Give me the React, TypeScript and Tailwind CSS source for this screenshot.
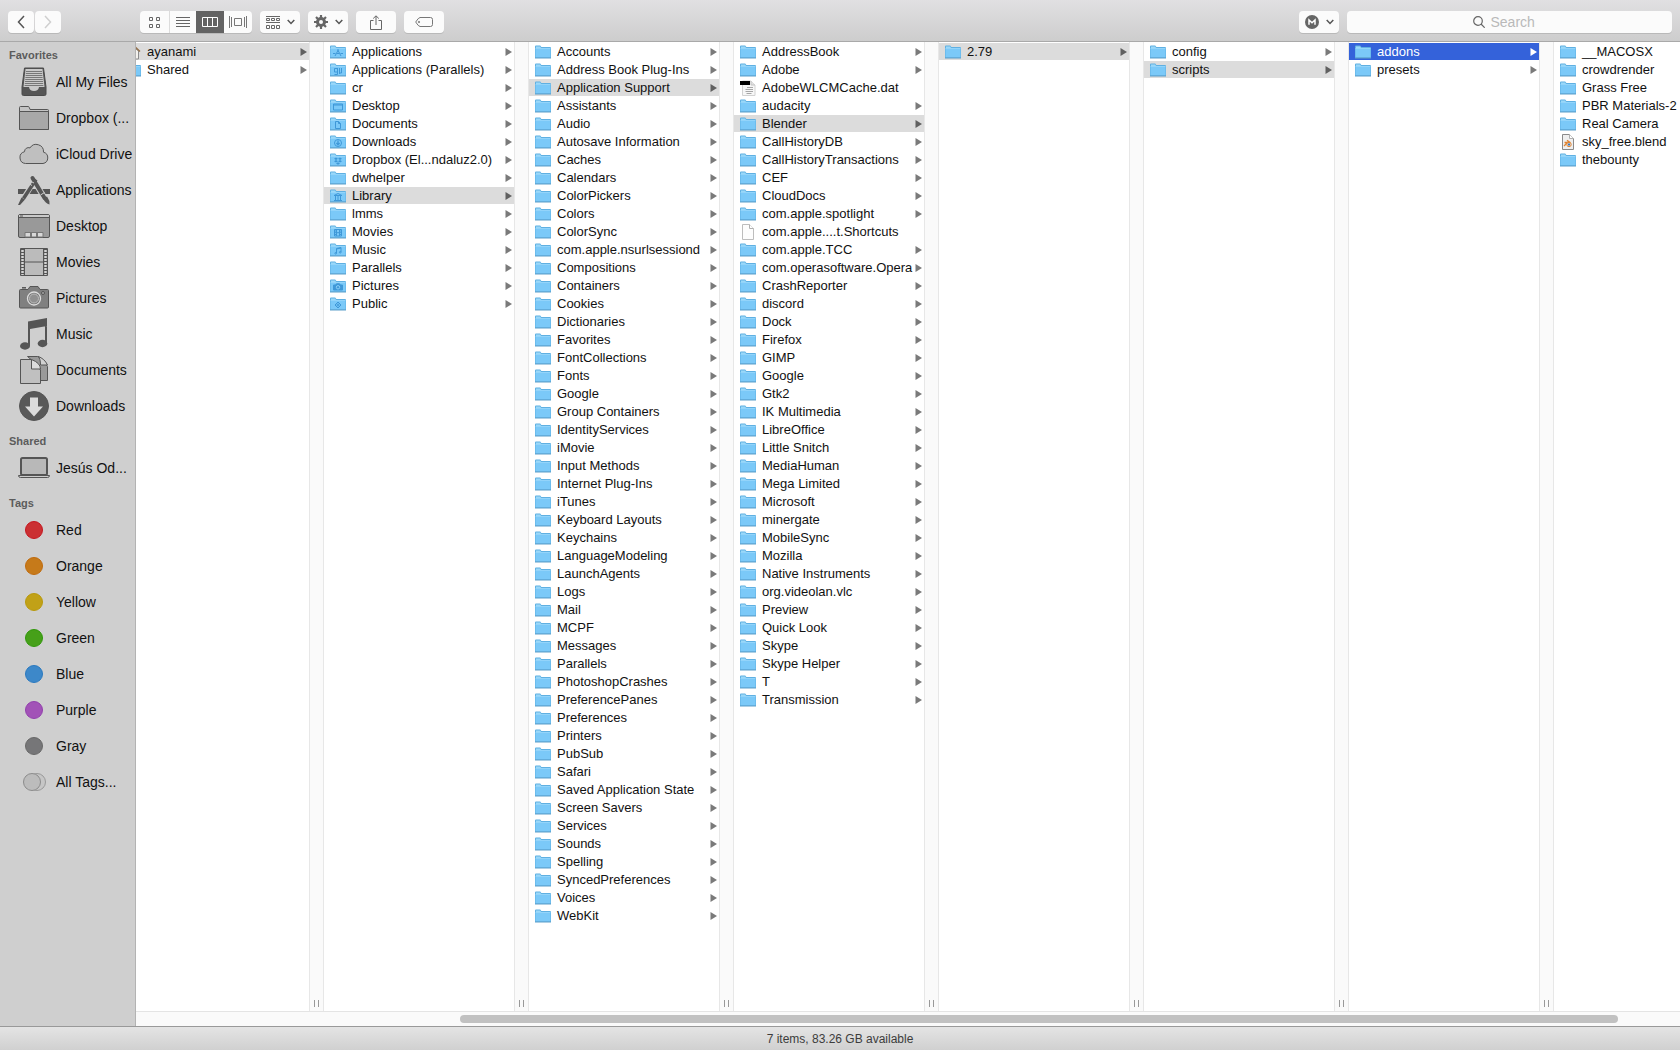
import type { ReactNode } from 'react';

type Entry = { name: string; glyph?: string; kind?: 'home' | 'dat' | 'file' | 'blend' };
type ColumnData = { id: string; selected?: string; active?: boolean; entries: Entry[] };

const folders = (names: string): Entry[] => names.split('|').map((name) => ({ name }));

const columns: ColumnData[] = [
  {
    id: 'Users',
    selected: 'ayanami',
    entries: [{ name: 'ayanami', kind: 'home' }, { name: 'Shared' }],
  },
  {
    id: 'ayanami',
    selected: 'Library',
    entries: [
      { name: 'Applications', glyph: 'apps' },
      { name: 'Applications (Parallels)', glyph: 'parallels' },
      { name: 'cr' },
      { name: 'Desktop', glyph: 'desktop' },
      { name: 'Documents', glyph: 'documents' },
      { name: 'Downloads', glyph: 'downloads' },
      { name: 'Dropbox (El...ndaluz2.0)', glyph: 'dropbox' },
      { name: 'dwhelper' },
      { name: 'Library', glyph: 'library' },
      { name: 'lmms' },
      { name: 'Movies', glyph: 'movies' },
      { name: 'Music', glyph: 'music' },
      { name: 'Parallels' },
      { name: 'Pictures', glyph: 'pictures' },
      { name: 'Public', glyph: 'public' },
    ],
  },
  {
    id: 'Library',
    selected: 'Application Support',
    entries: folders(
      'Accounts|Address Book Plug-Ins|Application Support|Assistants|Audio|Autosave Information|Caches|Calendars|ColorPickers|Colors|ColorSync|com.apple.nsurlsessiond|Compositions|Containers|Cookies|Dictionaries|Favorites|FontCollections|Fonts|Google|Group Containers|IdentityServices|iMovie|Input Methods|Internet Plug-Ins|iTunes|Keyboard Layouts|Keychains|LanguageModeling|LaunchAgents|Logs|Mail|MCPF|Messages|Parallels|PhotoshopCrashes|PreferencePanes|Preferences|Printers|PubSub|Safari|Saved Application State|Screen Savers|Services|Sounds|Spelling|SyncedPreferences|Voices|WebKit'
    ),
  },
  {
    id: 'Application Support',
    selected: 'Blender',
    entries: [
      ...folders('AddressBook|Adobe'),
      { name: 'AdobeWLCMCache.dat', kind: 'dat' },
      ...folders('audacity|Blender|CallHistoryDB|CallHistoryTransactions|CEF|CloudDocs|com.apple.spotlight'),
      { name: 'com.apple....t.Shortcuts', kind: 'file' },
      ...folders(
        'com.apple.TCC|com.operasoftware.Opera|CrashReporter|discord|Dock|Firefox|GIMP|Google|Gtk2|IK Multimedia|LibreOffice|Little Snitch|MediaHuman|Mega Limited|Microsoft|minergate|MobileSync|Mozilla|Native Instruments|org.videolan.vlc|Preview|Quick Look|Skype|Skype Helper|T|Transmission'
      ),
    ],
  },
  { id: 'Blender', selected: '2.79', entries: folders('2.79') },
  { id: '2.79', selected: 'scripts', entries: folders('config|scripts') },
  { id: 'scripts', selected: 'addons', active: true, entries: folders('addons|presets') },
  {
    id: 'addons',
    entries: [
      ...folders('__MACOSX|crowdrender|Grass Free|PBR Materials-2|Real Camera'),
      { name: 'sky_free.blend', kind: 'blend' },
      { name: 'thebounty' },
    ],
  },
];

// small marks stamped on the special folders
const glyphs: Record<string, ReactNode> = {
  apps: <path d="M8.5 4.5 5 11M7.500 4.500 11 11M3 8.500h2.500M7 8.500h2M10.500 8.500H13" />,
  parallels: <path d="M4.500 5.500h3v3.500h-3zM7.500 5v6.500H4.500M9.500 5v6M11.500 5v5h-2" />,
  desktop: <path d="M3.500 5h9v6h-9zM3.500 6h9" />,
  documents: <path d="M5.500 4.500h3l2 2v5h-5zM8.500 4.500v2h2" />,
  downloads: (
    <>
      <circle cx="8" cy="8" r="3.5" />
      <path d="M8 5.500v4M6.400 8 8 9.800 9.600 8" strokeWidth="1.300" />
    </>
  ),
  dropbox: (
    <path
      d="m6 4.500 2 1.200L6 7 4 5.700zM10 4.500l2 1.200L10 7 8 5.700zM6 7l2 1.300-2 1.200-2-1.200zM10 7l2 1.300-2 1.200-2-1.200zM8 9.300l2 1.200-2 1.200-2-1.200z"
      fill="#3f98d8"
      stroke="none"
    />
  ),
  library: <path d="M4 6.500h8L8 4.500zM4 11.500h8M5.500 7v4M8 7v4M10.500 7v4" />,
  movies: (
    <path d="M4.500 4.500h7v6.500h-7zM6.500 4.500V11M9.500 4.500V11M4.500 7.700h7M4.500 6h2M4.500 9.500h2M9.500 6h2M9.500 9.500h2" />
  ),
  music: (
    <>
      <path d="M6.500 10V5.500l4.500-1V9M6.500 6 11 5" />
      <circle cx="5.700" cy="10.300" r=".8" />
      <circle cx="10.200" cy="9.300" r=".8" />
    </>
  ),
  pictures: (
    <>
      <path d="M3.500 6h2l1-1.200h3l1 1.200h2v5h-9z" fill="#3f98d8" />
      <circle cx="8" cy="8.300" r="1.700" stroke="#8ad0f8" fill="#3f98d8" />
    </>
  ),
  public: <path d="m8 5 3 3-3 3-3-3zM8 6.500v3M6.500 8h3" />,
};

const FolderIcon = ({ glyph }: { glyph?: string }) => (
  <svg viewBox="0 0 16 14" className="h-3.5 w-4 shrink-0" aria-hidden="true">
    <path d="M0 13V1.500Q0 .5 1 .5h4.200l1.200 1.500H15q1 0 1 1V13z" fill="#5fb0e2" />
    <path d="M1 3V1.500h4l1.200 1.500z" fill="#9bd8f8" />
    <path d="M.5 4h15v8.500H.5z" fill="#7bc9f8" />
    <path d="M.5 3h15v1H.5z" fill="#93d4fa" />
    <path d="M0 12.500h16v1H0z" fill="#5c9fc9" />
    <g fill="none" stroke="#3f98d8">
      {glyph && glyphs[glyph]}
    </g>
  </svg>
);

const EntryIcon = ({ entry }: { entry: Entry }) => {
  if (!entry.kind) return <FolderIcon glyph={entry.glyph} />;
  if (entry.kind === 'home') {
    return (
      <svg viewBox="0 0 16 16" className="size-4 shrink-0" fill="none" aria-hidden="true">
        <path d="M3 7v8h10.500V7L8 2.500z" fill="#f4f2ee" stroke="#8b8b8b" />
        <path d="M.5 8 8 1l7 6.500" stroke="#94714c" strokeWidth="1.500" />
        <path d="M6 10h3v5H6z" fill="#a17c55" />
      </svg>
    );
  }
  if (entry.kind === 'dat') {
    return (
      <svg viewBox="0 0 16 16" className="size-4 shrink-0" fill="none" aria-hidden="true">
        <path d="M2.500 1h8.500l4 4v10.500H2.500z" fill="#f7f7f7" stroke="#d2d2d2" />
        <path d="M11 1v4h4" fill="#e2e2e2" stroke="#c4c4c4" />
        <path d="M7 7.500h6M5.500 9.500h7.500M5.500 11.500h7.500M6.500 13.500h5" stroke="#a6a6a6" />
        <path d="M0 1h10v4H0z" fill="#000" />
      </svg>
    );
  }
  return (
    <svg viewBox="0 0 16 16" className="size-4 shrink-0" fill="none" aria-hidden="true">
      <path
        d="M2.500.5H9.500l4 4v11h-11z"
        fill={entry.kind === 'blend' ? '#efefef' : '#fdfdfd'}
        stroke={entry.kind === 'blend' ? '#8a8a8a' : '#bdbdbd'}
      />
      <path d="M9.500.5v4h4" fill="#fff" stroke="#b0b0b0" />
      {entry.kind === 'blend' && (
        <>
          <path d="M4 12 8 8M4.500 8.500h4M7 6.200l3.500 2.500" stroke="#e0832f" strokeWidth="1.300" />
          <circle cx="9" cy="10.500" r="2.200" fill="#fff" stroke="#e0832f" />
          <circle cx="9" cy="10.500" r="1.200" fill="#3f76b5" />
        </>
      )}
    </svg>
  );
};

const Column = ({ column }: { column: ColumnData }) => (
  <ul className="flex w-[190px] shrink-0 flex-col gap-px pt-px" aria-label={column.id}>
    {column.entries.map((entry) => {
      const selected = entry.name === column.selected;
      const blue = selected && column.active;
      return (
        <li key={entry.name}>
          <button
            type="button"
            className={`flex h-[17px] w-full items-center pr-0.5 pl-1.5 text-left text-[13px] leading-[17px] whitespace-nowrap ${
              blue ? 'bg-[#3462da] text-white' : selected ? 'bg-[#dcdcdc] text-[#111]' : 'text-[#111]'
            }`}
          >
            <EntryIcon entry={entry} />
            <span className="ml-1.5 grow">{entry.name}</span>
            {(!entry.kind || entry.kind === 'home') && (
              <svg
                viewBox="0 0 7 8"
                className={`h-2 w-[7px] shrink-0 ${blue ? 'fill-white' : selected ? 'fill-[#606060]' : 'fill-[#7a7a7a]'}`}
                aria-hidden="true"
              >
                <path d="M.5 0 7 4 .5 8z" />
              </svg>
            )}
          </button>
        </li>
      );
    })}
  </ul>
);

const Gutter = () => (
  <div className="flex w-[15px] shrink-0 items-end justify-center gap-[3px] border-x border-[#e7e7e7] bg-[#fafafa] pb-1">
    <span className="h-[7px] w-px bg-[#999]" />
    <span className="h-[7px] w-px bg-[#999]" />
  </div>
);

const SideIcon = ({ children }: { children: ReactNode }) => (
  <svg viewBox="0 0 32 32" className="size-8 shrink-0" fill="none" stroke="#555" aria-hidden="true">
    {children}
  </svg>
);

const favorites: { name: string; icon: ReactNode }[] = [
  {
    name: 'All My Files',
    icon: (
      <>
        <path d="M6.500 2h19L28 21v7q0 1.500-1.500 1.500h-21Q4 29.500 4 28v-7z" fill="#555" stroke="#4a4a4a" />
        <path d="M7.500 3h17L26.500 21H21q-.5 4-5 4t-5-4H5.500z" fill="#c9c9c9" stroke="none" />
        <path
          d="M8 5.500h16M7.800 7.500h16.400M7.600 9.500h16.800M7.400 11.500h17.200M7.200 13.500h17.600M7 15.500h18M6.800 17.500h18.400M6.600 19.500h18.800"
          stroke="#777"
        />
      </>
    ),
  },
  {
    name: 'Dropbox (...',
    icon: (
      <>
        <path d="M1.500 27V5.500q0-1 1-1h7.500q1 0 1.300 1l.7 2H29.500q1 0 1 1V27q0 .5-.5.5H2q-.5 0-.5-.5z" fill="#c4c4c4" />
        <path d="M1.500 9.500h29V27.500h-29z" fill="#a8a8a8" />
      </>
    ),
  },
  {
    name: 'iCloud Drive',
    icon: (
      <path
        d="M7.500 25.500a6 6 0 0 1-1-11.800 4 4 0 0 1 5.500-3.800 7.300 7.300 0 0 1 13.500 4.300 5.800 5.800 0 0 1-.5 11.300z"
        fill="#bfbfbf"
      />
    ),
  },
  {
    name: 'Applications',
    icon: (
      <>
        <path d="M0 15h32v5H0z" fill="#555" stroke="none" />
        <path d="M14.500 4 27 25" stroke="#cfcfcf" strokeWidth="6" />
        <path d="M17.500 5 4 27" stroke="#cfcfcf" strokeWidth="5.500" />
        <path d="M14.500 4 26.500 24" strokeWidth="4" strokeLinecap="round" />
        <path d="M18 5.500 5.500 24.500" strokeWidth="3.500" />
        <path d="M25 24.500l4-2q3 4 2.500 8-4-1-6.500-6zM3.500 23.500l3.500 2-5 5.500H0z" fill="#555" stroke="none" />
        <path d="m10 9 4 2.500M22.500 21l4-2.500M12 7l4 2" stroke="#cfcfcf" />
      </>
    ),
  },
  {
    name: 'Desktop',
    icon: (
      <>
        <rect x=".5" y="4.500" width="31" height="23" rx="1.500" fill="#999" />
        <path d="M1 5h30v2H1z" fill="#c9c9c9" stroke="none" />
        <path d="M1 7.500h30M2 6h3" />
        <path d="M7 22.500h18v4.500H7z" fill="#d8d8d8" stroke="#777" />
        <path d="M13 22.500V27M19 22.500V27" stroke="#777" strokeWidth="2" />
      </>
    ),
  },
  {
    name: 'Movies',
    icon: (
      <>
        <path d="M2.500 2.500h27v27h-27z" fill="#bbb" />
        <path d="M4.500 3v26M27.500 3v26" stroke="#555" strokeWidth="4" />
        <path d="M4.500 4v25M27.500 4v25" stroke="#d5d5d5" strokeWidth="2.500" strokeDasharray="2 1" />
        <path d="M6.500 2.500v27M25.500 2.500v27M6.500 16h19" />
      </>
    ),
  },
  {
    name: 'Pictures',
    icon: (
      <>
        <path d="M1.500 8.500q0-1 1-1H10l2-3h8l2 3h7.500q1 0 1 1V25q0 1-1 1h-27q-1 0-1-1z" fill="#808080" />
        <path d="M4 5.800h4" strokeWidth="1.500" />
        <circle cx="16" cy="16.500" r="6.500" fill="#777" stroke="#ddd" strokeWidth="1.300" />
        <circle cx="16" cy="16.500" r="4.500" fill="#909090" stroke="#bbb" />
        <circle cx="25" cy="11" r="1.500" fill="#aaa" />
      </>
    ),
  },
  {
    name: 'Music',
    icon: (
      <g fill="#555" stroke="none">
        <path d="M10 3.500 29 0v8L12 11v17h-2zM27 6h2v19h-2z" />
        <ellipse cx="7" cy="28" rx="5" ry="3.700" />
        <ellipse cx="24.500" cy="25.500" rx="4.800" ry="3.700" />
      </g>
    ),
  },
  {
    name: 'Documents',
    icon: (
      <>
        <path d="M9.500 2.500h10q3 0 10 10v14H16V8z" fill="#999" />
        <path d="M20 2.500q2.500 2 2.500 8.500h7q-3-6.500-9.500-8.500z" fill="#d0d0d0" />
        <path d="M2.500 5.500h11L22.500 16v13.500h-20z" fill="#c0c0c0" />
        <path d="M13.500 5.500v9.500h9q0-6-9-9.500z" fill="#dcdcdc" />
      </>
    ),
  },
  {
    name: 'Downloads',
    icon: (
      <>
        <circle cx="16" cy="16" r="14.500" fill="#595959" />
        <path d="M12 7.500h8v9h5L16 26.500l-9-10h5z" fill="#dcdcdc" stroke="none" />
      </>
    ),
  },
];

const tags = [
  { name: 'Red', color: 'border-[#c5161f] bg-[#cb3033]' },
  { name: 'Orange', color: 'border-[#c06a0c] bg-[#c67a1a]' },
  { name: 'Yellow', color: 'border-[#b8990c] bg-[#c1a117]' },
  { name: 'Green', color: 'border-[#2f970a] bg-[#46a019]' },
  { name: 'Blue', color: 'border-[#2a79bf] bg-[#3d88c9]' },
  { name: 'Purple', color: 'border-[#9240ad] bg-[#a252b7]' },
  { name: 'Gray', color: 'border-[#686868] bg-[#767678]' },
];

const SideRow = ({ icon, name }: { icon: ReactNode; name: string }) => (
  <li>
    <a href="#" className="flex h-9 items-center gap-1.5 pl-[18px] text-sm whitespace-nowrap text-[#111]">
      <span className="flex size-8 shrink-0 items-center justify-center">{icon}</span>
      {name}
    </a>
  </li>
);

const SideHeading = ({ children }: { children: ReactNode }) => (
  <h2 className="h-[18px] pl-[9px] text-[11px] leading-[18px] font-bold text-[#5c5c5c]">{children}</h2>
);

const Sidebar = () => (
  <nav className="flex w-[136px] shrink-0 flex-col gap-2 overflow-hidden border-r border-[#b3b3b3] bg-[#cfcfcf] pt-1">
    <section>
      <SideHeading>Favorites</SideHeading>
      <ul>
        {favorites.map((item) => (
          <SideRow key={item.name} name={item.name} icon={<SideIcon>{item.icon}</SideIcon>} />
        ))}
      </ul>
    </section>
    <section>
      <SideHeading>Shared</SideHeading>
      <ul>
        <SideRow
          name="Jesús Od..."
          icon={
            <SideIcon>
              <rect x="3" y="6" width="26" height="17" rx="1.500" fill="#b8b8b8" strokeWidth="2" />
              <path d="M.5 23.500h31q0 2-2 2h-27q-2 0-2-2z" fill="#ccc" />
            </SideIcon>
          }
        />
      </ul>
    </section>
    <section>
      <SideHeading>Tags</SideHeading>
      <ul>
        {tags.map((tag) => (
          <SideRow
            key={tag.name}
            name={tag.name}
            icon={<span className={`size-[18px] rounded-full border ${tag.color}`} />}
          />
        ))}
        <SideRow
          name="All Tags..."
          icon={
            <SideIcon>
              <circle cx="19" cy="16" r="8.500" fill="#c6c6c6" stroke="#999" />
              <circle cx="14" cy="16" r="8.500" fill="#bcbcbc" stroke="#8c8c8c" />
            </SideIcon>
          }
        />
      </ul>
    </section>
  </nav>
);

const ToolButton = ({ label, className, children }: { label: string; className: string; children: ReactNode }) => (
  <button
    type="button"
    aria-label={label}
    className={`flex h-[22px] items-center justify-center ${className}`}
  >
    {children}
  </button>
);

const boxed = 'w-10 gap-[7px] rounded bg-[#fbfbfb] shadow-[0_1px_0_#b9b9b9]';

const Chevron = () => (
  <svg viewBox="0 0 8 6" className="h-1.5 w-2" fill="none" stroke="#555" strokeWidth="1.500" aria-hidden="true">
    <path d="M.7 1 4 4.500 7.300 1" />
  </svg>
);

const Toolbar = () => (
  <header className="flex h-[42px] shrink-0 items-center gap-2 border-b border-[#a9a9a9] bg-linear-to-b from-[#e1e0e2] to-[#cdcdcd] px-2 pt-[3px]">
    <div className="mr-[71px] flex gap-px">
      <ToolButton label="Back" className="w-[26px] rounded bg-[#fbfbfb] shadow-[0_1px_0_#b9b9b9]">
        <svg viewBox="0 0 8 14" className="h-3.5 w-2" fill="none" stroke="#555" strokeWidth="1.500">
          <path d="M7 1 1.500 7 7 13" />
        </svg>
      </ToolButton>
      <ToolButton label="Forward" className="w-[26px] rounded bg-[#fbfbfb] shadow-[0_1px_0_#b9b9b9]">
        <svg viewBox="0 0 8 14" className="h-3.5 w-2" fill="none" stroke="#cfcfcf" strokeWidth="1.500">
          <path d="m1 1 5.500 6L1 13" />
        </svg>
      </ToolButton>
    </div>

    <div className="flex overflow-hidden rounded bg-[#fbfbfb] shadow-[0_1px_0_#b9b9b9]">
      <ToolButton label="Icon view" className="w-[30px] border-r border-[#dcdcdc]">
        <svg viewBox="0 0 11 11" className="size-[11px]" fill="none" stroke="#666">
          <path d="M.5.500h3v3h-3zM7.500.500h3v3h-3zM.5 7.500h3v3h-3zM7.500 7.500h3v3h-3z" />
        </svg>
      </ToolButton>
      <ToolButton label="List view" className="w-[26px]">
        <svg viewBox="0 0 14 10" className="h-2.5 w-3.5" stroke="#666">
          <path d="M0 .5h14M0 3.500h14M0 6.500h14M0 9.500h14" />
        </svg>
      </ToolButton>
      <ToolButton label="Column view" className="w-7 bg-[#636363]">
        <svg viewBox="0 0 16 10" className="h-2.5 w-4" fill="none" stroke="#fff">
          <path d="M.5.500h15v9H.5zM5.500.500v9M10.500.500v9" />
        </svg>
      </ToolButton>
      <ToolButton label="Cover Flow view" className="w-7">
        <svg viewBox="0 0 18 12" className="h-3 w-[18px]" fill="none" stroke="#777">
          <path d="M.5 0v12M2.500 1v10M15.500 1v10M17.500 0v12M5.500 2.500h7v7h-7z" />
        </svg>
      </ToolButton>
    </div>

    <ToolButton label="Arrange" className={boxed}>
      <svg viewBox="0 0 14 13" className="h-[13px] w-3.5" fill="none" stroke="#666">
        <path d="M0 .5h14M0 6.500h14M.5 2.500h3v2h-3zM5.500 2.500h3v2h-3zM10.500 2.500h3v2h-3zM.5 9.500h3v3h-3zM5.500 9.500h3v3h-3zM10.500 9.500h3v3h-3z" />
      </svg>
      <Chevron />
    </ToolButton>
    <ToolButton label="Action" className={boxed}>
      <svg viewBox="0 0 14 14" className="size-3.5" fill="none" stroke="#666">
        <circle cx="7" cy="7" r="3.500" strokeWidth="3" />
        <path
          d="M7 0v3M7 11v3M0 7h3M11 7h3M2 2l2.200 2.200M9.800 9.800 12 12M2 12l2.200-2.200M9.800 4.200 12 2"
          strokeWidth="2.200"
        />
      </svg>
      <Chevron />
    </ToolButton>
    <ToolButton label="Share" className={boxed}>
      <svg viewBox="0 0 12 15" className="h-[15px] w-3" fill="none" stroke="#666">
        <path d="M3.500 5.500h-3v9h11v-9h-3M6 10V1M3.200 3.500 6 .8l2.800 2.700" />
      </svg>
    </ToolButton>
    <ToolButton label="Edit tags" className={boxed}>
      <svg viewBox="0 0 18 10" className="h-2.5 w-[18px]" fill="none" stroke="#777">
        <path d="M5 .5h10.500q2 0 2 2v5q0 2-2 2H5Q3.500 9.500.7 5 3.500.5 5 .5z" />
        <circle cx="4" cy="5" r=".7" />
      </svg>
    </ToolButton>

    <ToolButton label="MEGA" className={`ml-auto ${boxed}`}>
      <svg viewBox="0 0 14 14" className="size-3.5" aria-hidden="true">
        <circle cx="7" cy="7" r="7" fill="#666" />
        <path d="M4 9.800V5l3 2.800L10 5v4.800" fill="none" stroke="#fff" strokeWidth="1.500" />
      </svg>
      <Chevron />
    </ToolButton>
    <label className="flex h-[22px] w-[325px] items-center justify-center gap-1.5 rounded bg-[#fbfbfb] shadow-[0_1px_0_#b9b9b9]">
      <svg viewBox="0 0 12 12" className="size-3" fill="none" stroke="#666" strokeWidth="1.200" aria-hidden="true">
        <circle cx="5" cy="5" r="4.300" />
        <path d="m8 8 3.700 3.700" />
      </svg>
      <input
        type="text"
        aria-label="Search"
        placeholder="Search"
        className="w-14 bg-transparent text-sm text-[#333] outline-none placeholder:text-[#b9b9b9]"
      />
    </label>
  </header>
);

export default function App() {
  return (
    <div className="flex h-screen flex-col overflow-hidden bg-white font-['Liberation_Sans',Arial,sans-serif]">
      <Toolbar />
      <div className="flex min-h-0 grow">
        <Sidebar />
        <main className="flex min-w-0 grow flex-col">
          {/* scrolled so that the first column is partly cut off */}
          <div className="flex min-h-0 grow overflow-hidden">
            <div className="-ml-[17px] flex">
              {columns.map((column, i) => (
                <div key={column.id} className="flex">
                  <Column column={column} />
                  {i < columns.length - 1 && <Gutter />}
                </div>
              ))}
            </div>
          </div>
          <div className="flex h-[15px] shrink-0 items-center border-t border-[#e4e4e4] bg-[#fafafa]">
            <div className="ml-[21%] h-2 w-[75%] rounded-full bg-[#c1c1c1]" />
          </div>
        </main>
      </div>
      <footer className="flex h-6 shrink-0 items-center justify-center border-t border-[#999] bg-linear-to-b from-[#e4e4e4] to-[#d0d0d0] text-xs text-[#3c3c3c]">
        7 items, 83.26 GB available
      </footer>
    </div>
  );
}
